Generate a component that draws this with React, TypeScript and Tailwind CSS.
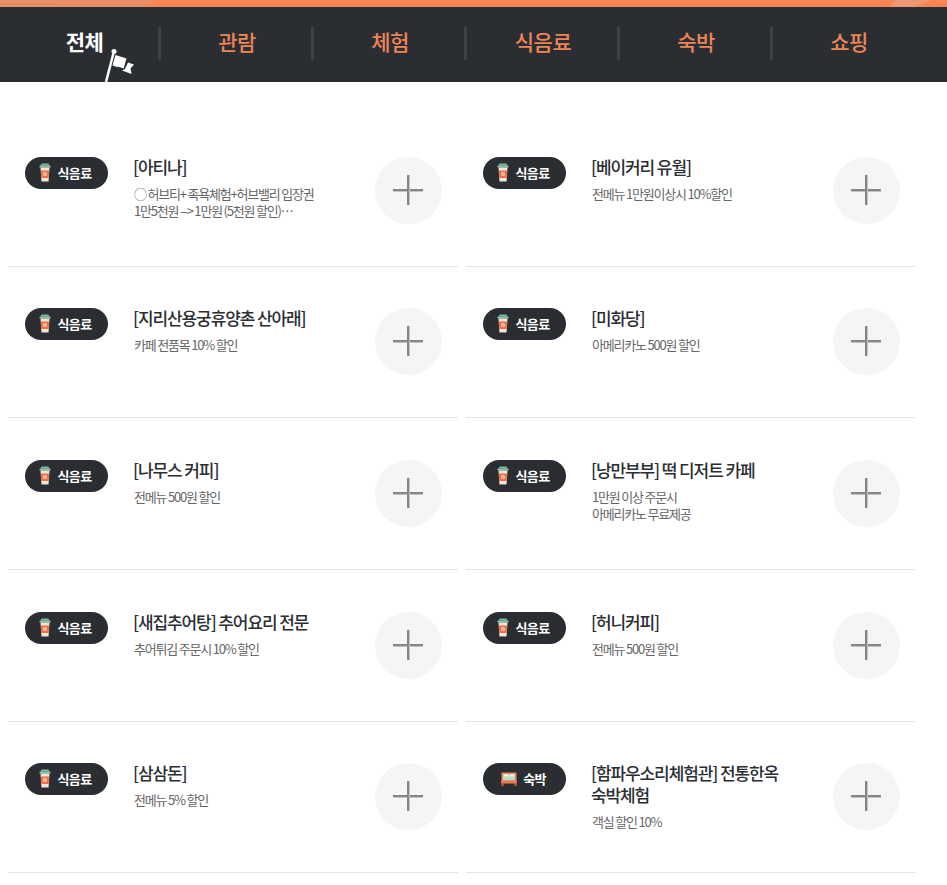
const font = { fontFamily: '"Noto Sans CJK KR", "Noto Sans", sans-serif' };

function Cup() {
  return (
    <svg width="12" height="19" viewBox="0 0 12 19" className="shrink-0">
      <path d="M2.500 0.500h7l1 2H1.500z" fill="#7fb89a" />
      <rect x="0.500" y="2.500" width="11" height="2" rx="0.500" fill="#8fc7a8" />
      <path d="M1.500 4.500h9L9.500 18.500H2.500z" fill="#efe7dc" />
      <path d="M1.800 7.500h8.400l-.6 7.500H2.400z" fill="#ee6f45" />
      <circle cx="6" cy="11" r="2" fill="#f8d5c4" />
      <circle cx="6" cy="11" r="0.800" fill="#ee6f45" />
    </svg>
  );
}

function Bed() {
  return (
    <svg width="16" height="14" viewBox="0 0 16 14" className="shrink-0">
      <rect x="0.500" y="0.500" width="15" height="11" fill="#f08452" />
      <rect x="2" y="2" width="12" height="6.500" fill="#b9dcc4" />
      <rect x="3" y="2.500" width="4" height="2" fill="#f7f3ea" />
      <rect x="9" y="2.500" width="4" height="2" fill="#f7f3ea" />
      <rect x="0" y="8.500" width="16" height="2.500" fill="#ee7b4f" />
      <rect x="0.500" y="11" width="2" height="3" fill="#c9623c" />
      <rect x="13.500" y="11" width="2" height="3" fill="#c9623c" />
    </svg>
  );
}

function Flag() {
  return (
    <svg width="32" height="34" viewBox="0 0 32 34" className="absolute left-[38px] top-[41px]">
      <path d="M2 34 L9.500 5" stroke="#fff" strokeWidth="2.500" fill="none" />
      <circle cx="10" cy="3.500" r="2.500" fill="#fff" />
      <path d="M11.500 7 L22.500 10.500 L19.500 21 L8.500 17.500z" fill="#fff" />
      <path d="M24 14.500 L30 16.500 L26.500 20.500 L27.500 26 L18 22.500 L21 21z" fill="#fff" />
      <path d="M13.500 18.500 L20 20.500 L17.500 23z" fill="#2a2e33" />
    </svg>
  );
}

const tabs = ["관람", "체험", "식음료", "숙박", "쇼핑"];

type Item = { title: string; desc: string[]; tag?: "stay"; rowClass: string };

const items: Item[] = [
  { title: "[아티나]", desc: ["◯ 허브티+ 족욕체험+허브밸리 입장권", "1만5천원 --> 1만원 (5천원 할인)⋯"], rowClass: "h-[152px] pt-[42px]" },
  { title: "[베이커리 유월]", desc: ["전메뉴 1만원이상시 10%할인"], rowClass: "h-[152px] pt-[42px]" },
  { title: "[지리산용궁휴양촌 산아래]", desc: ["카페 전품목 10% 할인"], rowClass: "h-[151px] pt-[41px]" },
  { title: "[미화당]", desc: ["아메리카노 500원 할인"], rowClass: "h-[151px] pt-[41px]" },
  { title: "[나무스 커피]", desc: ["전메뉴 500원 할인"], rowClass: "h-[152px] pt-[42px]" },
  { title: "[낭만부부] 떡 디저트 카페", desc: ["1만원 이상 주문시", "아메리카노 무료제공"], rowClass: "h-[152px] pt-[42px]" },
  { title: "[새집추어탕] 추어요리 전문", desc: ["추어튀김 주문시 10% 할인"], rowClass: "h-[152px] pt-[42px]" },
  { title: "[허니커피]", desc: ["전메뉴 500원 할인"], rowClass: "h-[152px] pt-[42px]" },
  { title: "[삼삼돈]", desc: ["전메뉴 5% 할인"], rowClass: "h-[151px] pt-[41px]" },
  { title: "[함파우소리체험관] 전통한옥 숙박체험", desc: ["객실 할인 10%"], tag: "stay", rowClass: "h-[151px] pt-[41px]" },
];

function Row({ item }: { item: Item }) {
  return (
    <div className={`flex items-start border-b border-[#e5e5e5] pl-[17px] ${item.rowClass}`}>
      <div className="flex h-[31.500px] w-[83px] shrink-0 items-center justify-center gap-[6px] rounded-full bg-[#2a2e33] pr-[2px] text-[13px] font-bold tracking-[-0.6px] text-white">
        {item.tag === "stay" ? <Bed /> : <Cup />}
        <span>{item.tag === "stay" ? "숙박" : "식음료"}</span>
      </div>
      <div className="ml-[26px] -mt-[1px] w-[200px] shrink-0">
        <div className="-ml-[1px] break-keep text-[17px] font-medium leading-[22px] tracking-[-1.100px] text-[#2a2e33]">{item.title}</div>
        <div className="mt-[6.500px] whitespace-pre text-[13px] leading-[17px] tracking-[-1.200px] text-[#666]">
          {item.desc.join("\n")}
        </div>
      </div>
      <div className="relative ml-[41px] h-[66.500px] w-[66.500px] shrink-0 rounded-full bg-[#f5f5f5]">
        <div className="absolute left-[18px] top-[32px] h-[2px] w-[30px] bg-[#858585] shadow-[0_1px_0_#c4c4c4]" />
        <div className="absolute left-[32px] top-[18px] h-[30px] w-[2px] bg-[#858585] shadow-[1px_0_0_#c4c4c4]" />
      </div>
    </div>
  );
}

export default function App() {
  return (
    <div className="min-h-[885px] bg-white" style={font}>
      <div className="relative h-[7px] bg-[#fb8553]">
        <svg width="947" height="7" viewBox="0 0 947 7" className="absolute left-0 top-0">
          <path d="M0 0H155L145 7H0z" fill="#ea9068" />
          <path d="M0 3H56V5H0z" fill="#e08a63" />
          <path d="M896 0H932L915 7H890z" fill="#ee9873" />
        </svg>
      </div>
      <div className="flex h-[75px] bg-[#2a2e33] pl-[8px] text-[21px] font-medium tracking-[-0.5px]">
        <div className="relative flex h-full w-[153px] items-center justify-center pb-[5px] text-white">
          <span className="font-bold">전체</span>
          <div className="absolute right-0 top-[20px] h-[33px] w-[3px] bg-[#3e4247]" />
          <div className="absolute left-[58px] top-0 h-full w-0"><Flag /></div>
        </div>
        {tabs.map((t, i) => (
          <div key={t} className="relative flex h-full w-[153px] items-center justify-center pb-[5px] pr-[1px] text-[#ee8556]">
            <span>{t}</span>
            {i < 4 && <div className="absolute right-0 top-[20px] h-[33px] w-[3px] bg-[#3e4247]" />}
          </div>
        ))}
      </div>
      <div className="grid w-[924px] grid-cols-[450px_450px] gap-x-[8px] pl-[8px] pt-[33px]">
        {items.map((it) => (
          <Row key={it.title} item={it} />
        ))}
      </div>
    </div>
  );
}
